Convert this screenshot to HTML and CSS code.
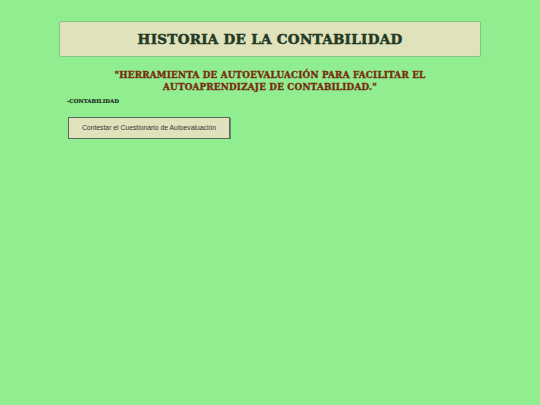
FILE: index.html
```html
<!DOCTYPE html>
<html lang="es">
<head>
<meta charset="utf-8">
<title>Historia de la Contabilidad</title>
<link rel="stylesheet" href="styles.css">
</head>
<body>
<div class="page">
  <header class="banner">
    <h1 class="title">HISTORIA DE LA CONTABILIDAD</h1>
  </header>
  <p class="quote">"HERRAMIENTA DE AUTOEVALUACIÓN PARA FACILITAR EL<br>AUTOAPRENDIZAJE DE CONTABILIDAD."</p>
  <p class="author">-CONTABILIDAD</p>
  <div class="actions">
    <button class="btn" type="button">Contestar el Cuestionario de Autoevaluación</button>
  </div>
</div>
</body>
</html>
```
FILE: styles.css
```css
html, body {
  margin: 0;
  padding: 0;
  background: #90ee90;
}
.page {
  padding: 21px 59px 0 59px;
  font-family: "DejaVu Serif", "Liberation Serif", serif;
}
.banner {
  background: #e0e2bb;
  border: 1px solid #86c486;
  border-radius: 2px;
  height: 34px;
  display: flex;
  align-items: center;
  justify-content: center;
}
.title {
  margin: 0;
  font-size: 13.5px;
  font-weight: 900;
  color: #243a24;
  letter-spacing: 0.3px;
  -webkit-text-stroke: 0.5px #243a24;
}
.quote {
  margin: 12px 0 0 0;
  text-align: center;
  font-size: 8.8px;
  font-weight: 900;
  line-height: 12px;
  color: #7a2c12;
  letter-spacing: 0.2px;
  -webkit-text-stroke: 0.35px #7a2c12;
}
.author {
  margin: 5px 0 0 8px;
  font-size: 5.5px;
  font-weight: 900;
  color: #1e2e1e;
  -webkit-text-stroke: 0.2px #1e2e1e;
}
.actions {
  margin: 11px 0 0 9px;
}
.btn {
  width: 162px;
  height: 22px;
  padding: 0;
  background: #e0e2bb;
  border: 1px solid #5a6a5a;
  box-shadow: 1px 1px 0 #6b8a6b;
  font-family: "Liberation Sans", Arial, sans-serif;
  font-size: 6.8px;
  color: #333333;
}
```
